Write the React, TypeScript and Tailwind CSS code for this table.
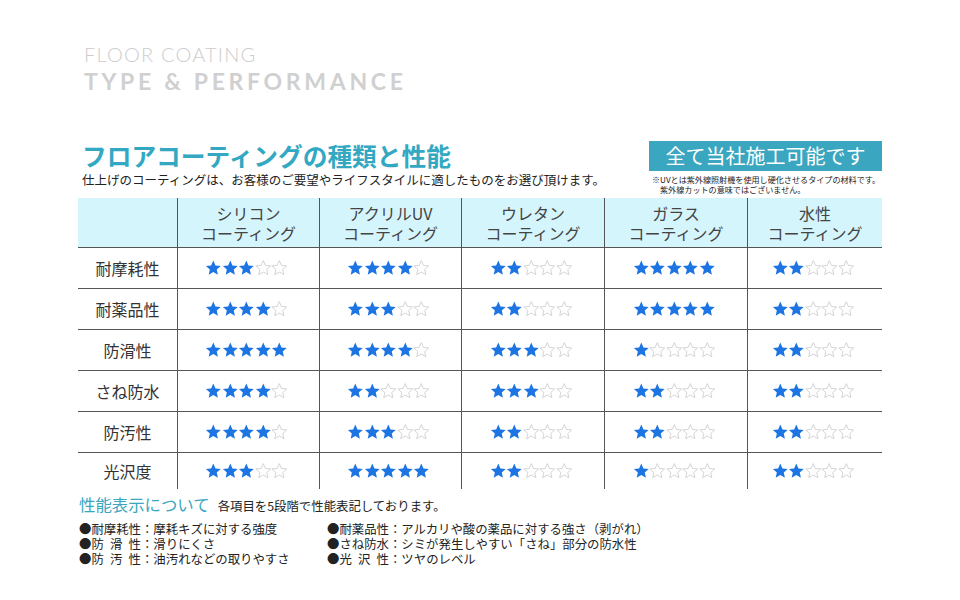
import React from "react";

const jp = "font-['Noto_Sans_CJK_JP',sans-serif]";

const COLS = ["シリコン", "アクリルUV", "ウレタン", "ガラス", "水性"];

// 各性能 × コーティング種別の星数
const ROWS: { label: string; stars: number[] }[] = [
  { label: "耐摩耗性", stars: [3, 4, 2, 5, 2] },
  { label: "耐薬品性", stars: [4, 3, 2, 5, 2] },
  { label: "防滑性", stars: [5, 4, 3, 1, 2] },
  { label: "さね防水", stars: [4, 2, 3, 2, 2] },
  { label: "防汚性", stars: [4, 3, 2, 2, 2] },
  { label: "光沢度", stars: [3, 5, 2, 1, 2] },
];

const STAR =
  "8,0.6 10.15,5.45 15.4,5.95 11.45,9.5 12.6,14.7 8,12 3.4,14.7 4.55,9.5 0.6,5.95 5.85,5.45";

function Stars({ n }: { n: number }) {
  return (
    <div className="flex items-center">
      {[0, 1, 2, 3, 4].map((i) => (
        <svg key={i} viewBox="0 0 16 16" className="w-[16.6px] h-[16px]">
          {i < n ? (
            <polygon points={STAR} fill="#1d74e3" />
          ) : (
            <polygon
              points={STAR}
              fill="none"
              stroke="#cfcfcf"
              strokeWidth="0.9"
              strokeLinejoin="round"
            />
          )}
        </svg>
      ))}
    </div>
  );
}

export default function App() {
  const grid = "grid grid-cols-[99px_142px_142px_143px_143px_135px]";

  return (
    <div className={`w-[960px] h-[600px] bg-white px-[78px] ${jp} overflow-hidden`}>
      {/* 英字見出し */}
      <div className="pt-[43px] pl-[6px] font-['Lato',sans-serif] text-[#cdcdcd]">
        <div className="text-[20px] leading-[22px] font-light tracking-[0.06em]">
          FLOOR COATING
        </div>
        <div className="mt-[3px] text-[23px] leading-[26px] font-bold tracking-[0.16em] text-[#d0d0d0]">
          TYPE &amp; PERFORMANCE
        </div>
      </div>

      {/* タイトル + バッジ */}
      <div className="mt-[46px] flex items-start justify-between">
        <div className="pl-[4px]">
          <div className="text-[24.7px] leading-[30px] font-bold text-[#33a8c2]">
            フロアコーティングの種類と性能
          </div>
          <div className="mt-[2px] text-[12.5px] leading-[16px] text-[#222]">
            仕上げのコーティングは、お客様のご要望やライフスタイルに適したものをお選び頂けます。
          </div>
        </div>
        <div className="flex flex-col items-end pt-[1px]">
          <div className="w-[233px] h-[30px] bg-[#3aa6bf] text-white text-[20px] leading-[30px] text-center">
            全て当社施工可能です
          </div>
          <div className="mt-[4px] w-[230px] text-[8.1px] leading-[10px] text-[#222]">
            <div>※UVとは紫外線照射機を使用し硬化させるタイプの材料です。</div>
            <div className="pl-[8px]">紫外線カットの意味ではございません。</div>
          </div>
        </div>
      </div>

      {/* 性能表 */}
      <div className="mt-[3px]">
        <div className={`${grid} h-[50px] bg-[#d5f5fc] border-b border-[#555]`}>
          <div />
          {COLS.map((c) => (
            <div
              key={c}
              className="border-l border-[#555] flex flex-col items-center justify-center text-[16px] leading-[20px] text-[#444]"
            >
              <span>{c}</span>
              <span>コーティング</span>
            </div>
          ))}
        </div>
        {ROWS.map((r, ri) => (
          <div
            key={r.label}
            className={`${grid} ${
              ri === ROWS.length - 1 ? "h-[36px]" : "h-[41px] border-b border-[#555]"
            }`}
          >
            <div className="flex items-center justify-center text-[16px] text-[#333]">
              {r.label}
            </div>
            {r.stars.map((s, ci) => (
              <div
                key={ci}
                className="border-l border-[#555] flex items-center justify-center pr-[4px]"
              >
                <Stars n={s} />
              </div>
            ))}
          </div>
        ))}
      </div>

      {/* 凡例 */}
      <div className="mt-[5px] pl-[1px]">
        <div className="flex items-baseline gap-[8px]">
          <span className="text-[16.4px] leading-[20px] text-[#3aa6bf]">
            性能表示について
          </span>
          <span className="text-[12.4px] text-[#222]">
            各項目を5段階で性能表記しております。
          </span>
        </div>
        <div className="mt-[6px] flex text-[12.4px] leading-[15px] text-[#222]">
          <div className="w-[248px]">
            <div>●耐摩耗性：摩耗キズに対する強度</div>
            <div>●防{"\u2002"}滑{"\u2002"}性：滑りにくさ</div>
            <div>●防{"\u2002"}汚{"\u2002"}性：油汚れなどの取りやすさ</div>
          </div>
          <div>
            <div>●耐薬品性：アルカリや酸の薬品に対する強さ（剥がれ）</div>
            <div>●さね防水：シミが発生しやすい「さね」部分の防水性</div>
            <div>●光{"\u2002"}沢{"\u2002"}性：ツヤのレベル</div>
          </div>
        </div>
      </div>
    </div>
  );
}
